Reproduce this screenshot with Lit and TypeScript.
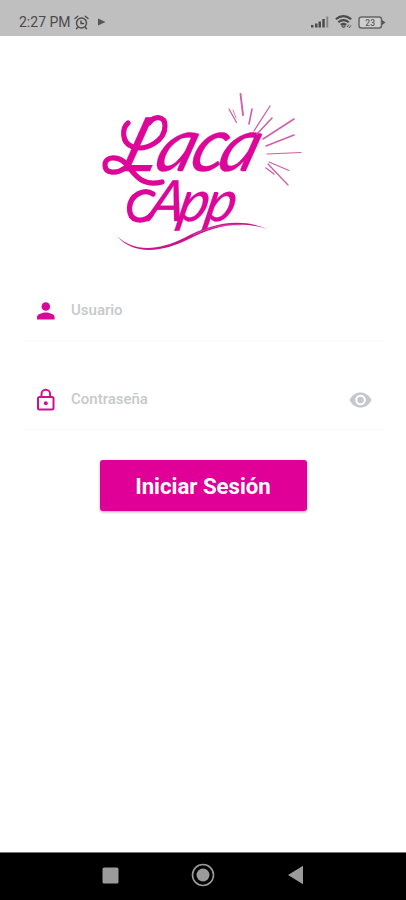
import { LitElement, html, svg, css } from "lit";
import { customElement } from "lit/decorators.js";

const rays: [number, number, number, number, number][] = [
  [229, 109, 236.5, 122.5, 1.3], [233, 110, 236, 118, .8], [240.5, 94, 243, 115, 1.9],
  [252, 109, 249, 124, 1.6], [270, 106, 254, 131, 1.3], [272, 118, 257, 134, 1.6],
  [294, 119, 263, 139, 1.5], [294, 135, 266, 146, 1.5], [301, 152.5, 267, 154, 1.2],
  [289, 170.5, 269, 162, 1.2], [274, 174, 266, 168, 1.4], [288, 185, 268, 164, 1.3],
];

@customElement("status-bar")
class StatusBar extends LitElement {
  static styles = css`
    :host { display: flex; justify-content: space-between; align-items: center; box-sizing: border-box;
      height: 36px; padding: 8px 20px 0 19px; background: #bfbfbf; color: #4b4b4b;
      font: 400 14px Roboto, sans-serif; }
    .group { display: flex; align-items: center; }
    .time { width: 55px; white-space: nowrap; }
    svg { display: block; }
    .play { margin-left: 9px; }
    .wifi { margin: 0 6px 0 6px; }
  `;
  render() {
    return html`
      <div class="group">
        <span class="time">2:27 PM</span>
        <svg width="15" height="15" viewBox="0 0 15 15" fill="none" stroke="#4b4b4b" stroke-width="1.4" stroke-linecap="round">
          <circle cx="7.5" cy="8" r="5"/><path d="M1 3.5 3.8 1.3M14 3.5l-2.800-2.200M3.500 12.500l-1 1.300M11.500 12.500l1 1.300M7 6v2.500h2.500"/>
        </svg>
        <svg class="play" width="8" height="8" viewBox="0 0 8 8"><path d="M0 .5 7.500 4 0 7.500z" fill="#555"/></svg>
      </div>
      <div class="group">
        <svg width="18" height="12" viewBox="0 0 18 12" fill="#4b4b4b">
          <path d="M0 9h2.500v2.500H0zM4 7.500h2.500v4H4zM7.500 5.500H10v6H7.500zM11.300 3h2.500v8.500h-2.500z"/><path d="M15.300.5h2v11h-2z" fill="#858585"/>
        </svg>
        <svg class="wifi" width="17" height="14" viewBox="0 0 17 14" fill="none" stroke="#4b4b4b" stroke-width="2.100">
          <path d="M.8 4.200q7.500-6 15.400 0M3.300 7.200q5.200-4.200 10.400 0M5.800 9.800q2.700-2 5.400 0"/><path d="m6.800 11 1.700 2 1.700-2zM12 12l2-2.500M14 13l2-2.500" stroke-width="1"/>
        </svg>
        <svg width="28" height="13" viewBox="0 0 28 13">
          <rect x="1" y="1" width="22.500" height="11" rx="2.500" fill="#d0d0d0" stroke="#666" stroke-width="1.500"/><path d="M24 4 27.500 6.500 24 9z" fill="#555"/>
          <text x="12.200" y="9.600" font-size="8.500" font-weight="500" text-anchor="middle" fill="#606060">23</text>
        </svg>
      </div>`;
  }
}

@customElement("brand-logo")
class BrandLogo extends LitElement {
  static styles = css`
    :host { display: block; height: 170px; }
    svg { display: block; margin: 0 auto; }
    text { font-family: Lato, sans-serif; font-style: italic; font-weight: 400; fill: #dc0798; stroke: #dc0798; stroke-width: .3; stroke-linejoin: round; }
    .first { font-size: 75px; }
    .second { font-size: 57px; }
    .swash { fill: none; stroke: #dc0798; stroke-width: 5.2; stroke-linecap: round; }
  `;
  render() {
    return html`
      <svg width="206" height="170" viewBox="100 90 206 170">
        <text class="first" transform="translate(118 171) skewX(-18)" x="0 34 69 97">Laca</text>
        <text class="second" transform="translate(146 221) skewX(-12)" x="0 30 57">App</text>
        <path class="swash" d="M128 123C122 128 121 143 133 147C146 151 165 141 165 126C165 116 155 115 149 123"/>
        <path class="swash" d="M125 168C117 174 105 174 105 165C105 156 119 155 127 165C135 175 142 187 162 182"/>
        <path class="swash" d="M153 194C144 188 130 195 129.500 208C129 222 143 223 151 215"/>
        <path d="M117 236C133 252 158 251 184 238C210 224 239 217 267 229C239 220 213 226 189 239C159 254 132 254 117 236Z" fill="#c9148d"/>
        <path d="M193 235Q216 223 241 225" fill="none" stroke="#dc5bb0" stroke-width=".7"/>
        ${rays.map(([a, b, c, d, w]) => svg`<path d="M${a} ${b}L${c} ${d}" stroke="#cf5fa8" stroke-width=${w} stroke-linecap="round"/>`)}
      </svg>`;
  }
}

@customElement("app-root")
class AppRoot extends LitElement {
  static styles = css`
    :host { display: flex; flex-direction: column; height: 900px; background: #fff; font-family: Roboto, sans-serif; }
    main { flex: 1; display: flex; flex-direction: column; padding: 54px 22px 0; }
    .field { display: flex; align-items: center; box-sizing: border-box; height: 60px; padding: 0 12px 0 13px; border-bottom: 1px solid #fafafa; color: #c6c9cb; font-size: 15px; font-weight: 500; }
    .user { margin-top: 21px; }
    .pass { margin-top: 29px; }
    .field span { flex: 1; margin-left: 14px; padding-bottom: 2px; }
    svg { display: block; }
    button { align-self: center; width: 207px; height: 51px; margin-top: 30px; padding: 0; border: 0; border-radius: 3px; background: #e00098; color: #fff; font: 700 22.200px Roboto, sans-serif; box-shadow: 0 1px 3px #0005; }
    nav { height: 48px; background: #000; border-top: 1px solid #777; box-sizing: border-box; display: flex; align-items: center; justify-content: space-between; padding: 0 102px 3px 102px; }
    .home { margin-right: 1px; }
  `;
  render() {
    return html`
      <status-bar></status-bar>
      <main>
        <brand-logo></brand-logo>
        <div class="field user">
          <svg width="22" height="22" viewBox="0 0 22 22" fill="#d90898"><circle cx="10.800" cy="6.500" r="4.300"/><path d="M2 19.500v-2.400c0-3 5.800-4.500 8.800-4.500s8.800 1.500 8.800 4.500v2.400z"/></svg>
          <span>Usuario</span>
        </div>
        <div class="field pass">
          <svg width="22" height="24" viewBox="0 0 22 24" fill="none" stroke="#d0108f" stroke-width="2"><rect x="3" y="9" width="15.500" height="12.500" rx="1.500"/><path d="M6.500 9V6a4.300 4.300 0 0 1 8.600 0v3"/><circle cx="10.800" cy="15.300" r="2" fill="#d0108f" stroke="none"/></svg>
          <span>Contraseña</span>
          <svg width="23" height="18" viewBox="0 0 23 18"><path d="M.5 9C3 4 7 1.500 11.500 1.500S20 4 22.500 9C20 14 16 16.500 11.500 16.500S3 14 .5 9z" fill="#c6c7cd"/><circle cx="11.500" cy="9" r="5.300" fill="#fff"/><circle cx="11.500" cy="9" r="3.200" fill="#c6c7cd"/></svg>
        </div>
        <button>Iniciar Sesión</button>
      </main>
      <nav>
        <svg width="17" height="17" viewBox="0 0 17 17"><rect x=".5" y=".5" width="16" height="16" rx="1.500" fill="#9b9b9b"/></svg>
        <svg class="home" width="24" height="24" viewBox="0 0 24 24"><circle cx="12" cy="12" r="10.500" fill="none" stroke="#9b9b9b" stroke-width="1.600"/><circle cx="12" cy="12" r="6.500" fill="#9b9b9b"/></svg>
        <svg width="16" height="20" viewBox="0 0 16 20"><path d="M0 10 15 .8v18.400z" fill="#9b9b9b"/></svg>
      </nav>`;
  }
}
